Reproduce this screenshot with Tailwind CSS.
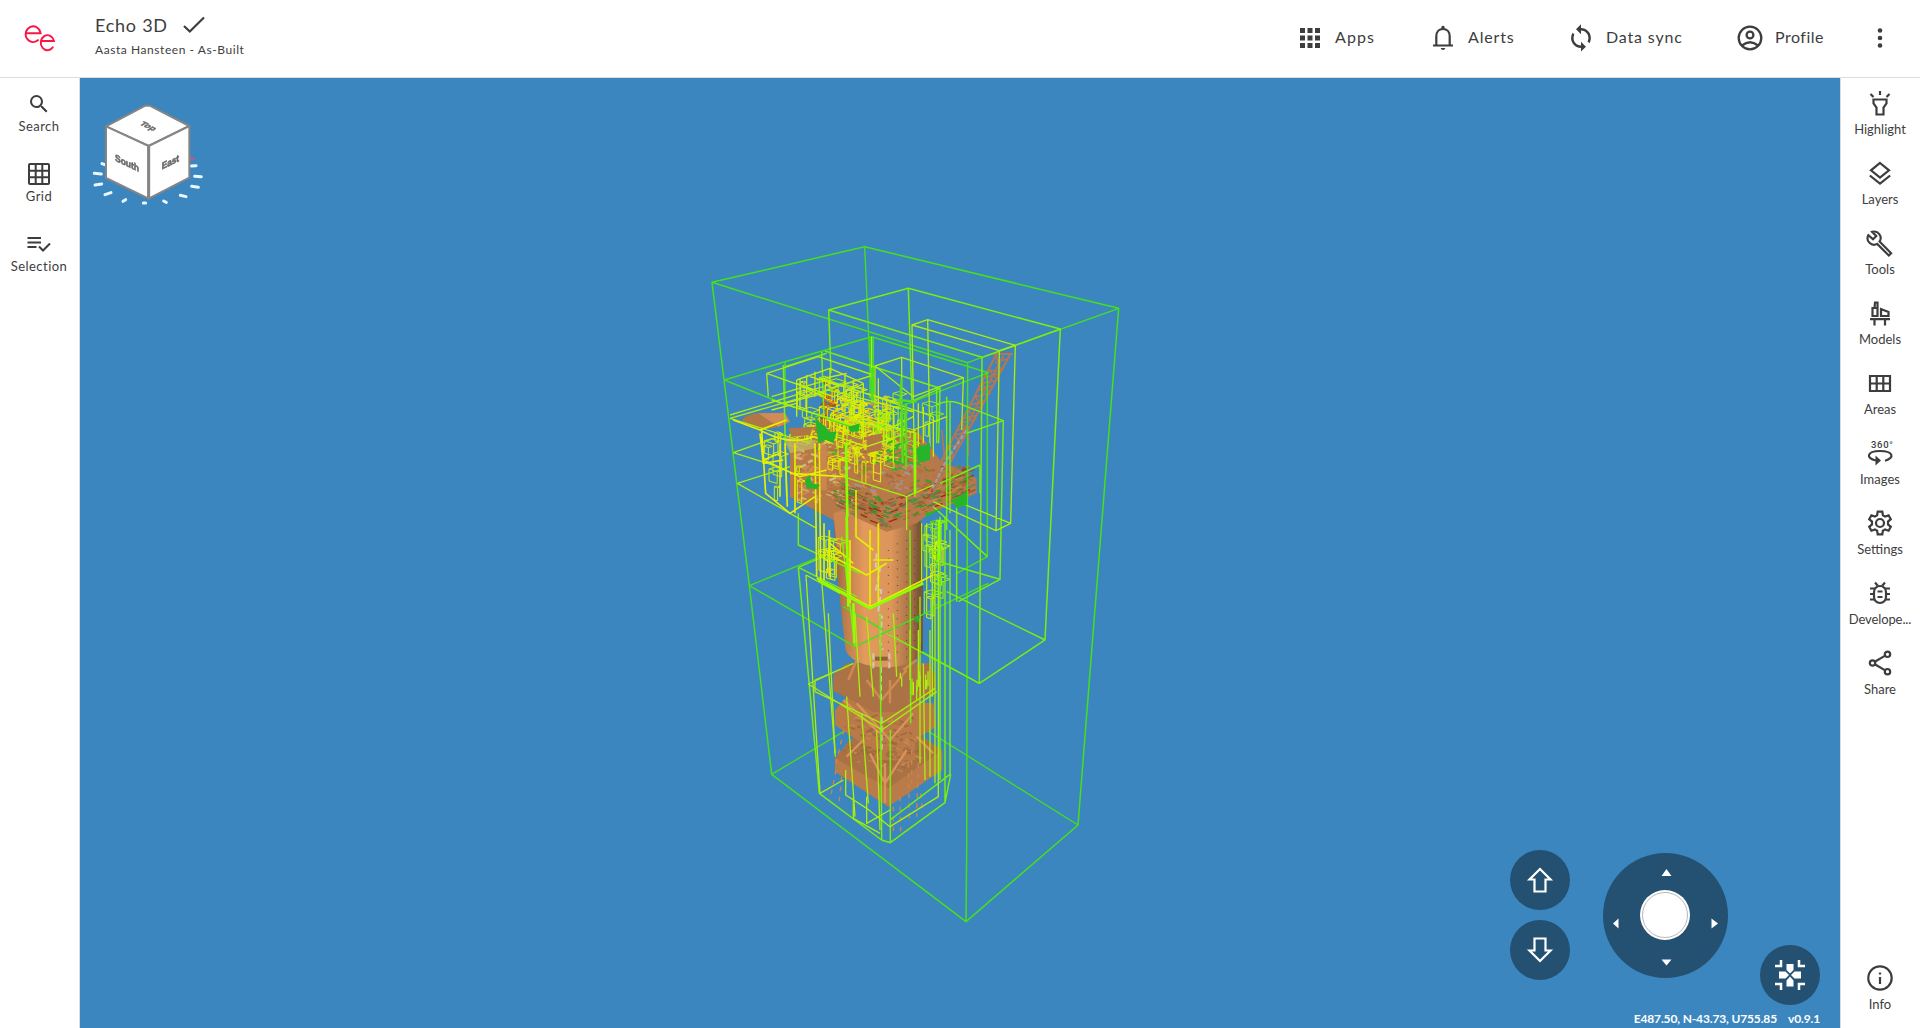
<!DOCTYPE html>
<html lang="en">
<head>
<meta charset="utf-8">
<title>Echo 3D</title>
<script src="https://cdn.jsdelivr.net/npm/@tailwindcss/browser@4"></script>
</head>
<body class="h-screen w-screen overflow-hidden bg-white font-['Lato',sans-serif] text-[#3d3d3d] flex flex-col">
<header class="h-[78px] shrink-0 border-b border-[#dcdcdc] flex">
  <div class="w-20 flex justify-center">
    <svg class="mt-[23px] w-8 h-8" viewBox="24 23 32 32" fill="none" stroke="#fb1444" stroke-width="1.9"><path d="M26 33.2H40.6A7.5 7.9 0 1 0 38.6 39.7"/><path d="M40.5 41H54A6.7 7.5 0 1 0 53.2 46.6"/></svg>
  </div>
  <div class="pl-[15px] pt-[13px] w-[400px]">
    <div class="flex items-center h-6 gap-[15px]"><span class="text-[18px] leading-6 tracking-[.75px] whitespace-nowrap">Echo 3D</span>
      <svg class="w-[22px] h-5" viewBox="0 0 22 20" fill="none" stroke="#3d3d3d" stroke-width="2.2"><path d="M1 11 6.8 16.5 21 2.5"/></svg></div>
    <div class="text-[12px] leading-4 mt-[5px] tracking-[.56px] whitespace-nowrap">Aasta Hansteen - As-Built</div>
  </div>
  <nav class="ml-auto flex h-[76px] items-center text-base whitespace-nowrap">
    <div class="w-[133px] flex items-center gap-[13px]"><svg class="w-6 h-6 shrink-0" viewBox="0 0 24 24" fill="#3d3d3d"><path d="M2 2h5v5H2zm7.5 0h5v5h-5zM17 2h5v5h-5zM2 9.5h5v5H2zm7.5 0h5v5h-5zm7.5 0h5v5h-5zM2 17h5v5H2zm7.5 0h5v5h-5zm7.5 0h5v5h-5z"/></svg><span class="-mt-[2px] tracking-[1.1px]">Apps</span></div>
    <div class="w-[138px] flex items-center gap-[13px]"><svg class="w-6 h-6 shrink-0 overflow-visible" viewBox="0 0 24 24" fill="none" stroke="#3d3d3d" stroke-width="2.2"><path d="M2 19.5h20M5.300 19V10.500C5.300 6 8 3 12 3s6.700 3 6.700 7.500V19"/><path d="M10.300 2.500V1.500a1.700 1.700 0 0 1 3.400 0v1zM9.700 22h4.600q-.5 2-2.300 2T9.700 22z" fill="#3d3d3d" stroke="none"/></svg><span class="-mt-[2px] tracking-[.85px]">Alerts</span></div>
    <div class="w-[169px] flex items-center gap-[13px]"><svg class="w-6 h-6 shrink-0 overflow-visible" viewBox="0 0 24 24" fill="#3d3d3d"><path transform="translate(-2.900 -2.900) scale(1.240)" d="M12 4V1L8 5l4 4V6c3.310 0 6 2.690 6 6 0 1.010-.25 1.970-.7 2.800l1.460 1.460A7.930 7.930 0 0 0 20 12c0-4.420-3.580-8-8-8zm0 14c-3.310 0-6-2.690-6-6 0-1.010.25-1.970.7-2.800L5.240 7.740A7.930 7.930 0 0 0 4 12c0 4.420 3.580 8 8 8v3l4-4-4-4v3z"/></svg><span class="-mt-[2px] tracking-[.85px]">Data sync</span></div>
    <div class="w-[130px] flex items-center gap-[13px]"><svg class="w-6 h-6 shrink-0 overflow-visible" viewBox="0 0 24 24" fill="none" stroke="#3d3d3d" stroke-width="2.300"><circle cx="12" cy="12" r="11.300"/><circle cx="12" cy="9" r="3.400"/><path d="M4 19.500Q12 13 20 19.500"/></svg><span class="-mt-[2px] tracking-[.5px]">Profile</span></div>
    <svg class="w-6 h-6 mr-7" viewBox="0 0 24 24" fill="#3d3d3d"><circle cx="12" cy="4.500" r="2.300"/><circle cx="12" cy="12" r="2.300"/><circle cx="12" cy="19.500" r="2.300"/></svg>
  </nav>
</header>
<div class="flex flex-1 min-h-0">
  <aside class="w-20 shrink-0 border-r border-[#dcdcdc] pr-px pt-[14px] text-[13px] leading-4 tracking-[.45px] text-center">
    <div class="h-[70px] flex flex-col items-center gap-[2px]"><svg class="w-6 h-6" viewBox="0 0 24 24" fill="#3d3d3d"><path d="M15.500 14h-.79l-.28-.27A6.471 6.471 0 0 0 16 9.500 6.500 6.500 0 1 0 9.500 16c1.610 0 3.090-.59 4.230-1.570l.27.28v.79l5 4.990L20.490 19l-4.990-5zm-6 0C7.010 14 5 11.990 5 9.500S7.010 5 9.500 5 14 7.010 14 9.500 11.990 14 9.500 14z"/></svg>Search</div>
    <div class="h-[70px] flex flex-col items-center gap-[2px]"><svg class="w-6 h-6" viewBox="0 0 24 24" fill="none" stroke="#3d3d3d" stroke-width="2"><rect x="2" y="2" width="20" height="20" rx="1"/><path d="M2 8.700h20M2 15.300h20M8.700 2v20M15.300 2v20"/></svg>Grid</div>
    <div class="h-[70px] flex flex-col items-center gap-[2px]"><svg class="w-6 h-6" viewBox="0 0 24 24" fill="none" stroke="#3d3d3d" stroke-width="2"><path d="M.5 6h13.500M.5 10.500h13.500M.5 15h9M12 14.500l4 4L23 11.500"/></svg>Selection</div>
  </aside>
  <main class="relative flex-1 bg-[#3b86be] overflow-hidden">
    <svg class="absolute inset-0 w-full h-full" viewBox="80 78 1760 950">
      <defs>
        <linearGradient id="leg"><stop offset="0" stop-color="#91603a"/><stop offset=".12" stop-color="#b97b49"/><stop offset=".35" stop-color="#e39a5d"/><stop offset=".65" stop-color="#dc955a"/><stop offset=".88" stop-color="#a26e46"/><stop offset="1" stop-color="#67472f"/></linearGradient>
        <filter id="soft"><feGaussianBlur stdDeviation="2"/></filter>
      </defs>
      <g transform="translate(700 230) scale(.33333)" fill="none" stroke-linejoin="round">
        <g stroke="#43e01e" stroke-width="4">
          <path d="M494 50 515 520M215 1633 562 1427 1134 1785M148 1067 360 980M550 1200 838 1360"/>
        </g>
        <!-- legs and pontoons -->
        <g stroke="none">
          <path fill="#b97b49" d="M405 1585 450 1530 540 1500 650 1510 727 1560V1620L565 1730 405 1625z"/>
          <path fill="#aa7244" d="M405 1585 450 1530 540 1500 650 1510 727 1560 565 1675z"/>
          <path fill="#b97a48" d="M405 1440 440 1400 700 1420 708 1490 645 1530V1590H530L500 1550 405 1485z"/>
          <path fill="#ab7345" d="M400 1335 440 1300 690 1300 708 1345V1385L600 1446H520L400 1382z"/>
          <path fill="url(#leg)" d="M400 850 640 830 668 890V1260C655 1330 450 1330 436 1255L412 1040z"/>
        </g>
        <path stroke="#7d5837" stroke-width="14" d="M660 880V1240"/>
        <path stroke="#5a432e" stroke-width="3" stroke-dasharray="3 22" d="M592 940V1290M620 930V1290M565 960V1290M644 930V1250"/>
        <path stroke="#8c6232" stroke-width="12" d="M525 1286h38"/>
        <path stroke="#d08a51" stroke-width="7" d="M445 1350 470 1290M500 1350 545 1410 620 1320M650 1290 610 1320M570 1420V1350"/>
        <g id="base"></g>
        <path stroke="#d9925a" stroke-width="7" d="M430 1410 540 1510M440 1580 490 1530M650 1520 700 1570M510 1570 555 1660 620 1560M470 1420 570 1530 640 1450M555 1600V1720"/>
        <path stroke="#cfc8c2" stroke-width="6" stroke-dasharray="18 9" d="M530 970 527 1010 541 1010 528 1080 544 1080 534 1150 546 1160 540 1235 548 1260M520 1270V1320M568 1270V1320M543 1310V1420M545 1460V1560"/>
        <path stroke="#c98550" stroke-width="4" stroke-dasharray="14 16" d="M408 1620 390 1710M425 1640 417 1720M580 1730V1810M600 1700 602 1810M625 1600 628 1770M655 1600 650 1760M662 1690 668 1750M635 1560V1660M432 1500 408 1600"/>
        <!-- topside decks -->
        <g stroke="none">
          <path fill="#b77949" d="M270 620 380 560 560 600 650 600 720 690 830 745V790L690 850 650 880 560 905 440 850 400 870 270 800z"/>
          <ellipse cx="195" cy="572" rx="68" ry="24" fill="#b07645"/>
          <path fill="#d18c56" d="M175 550 255 548 270 575 235 590z"/>
          <path fill="#cb864f" d="M400 850 460 830 460 960 410 950z"/>
        </g>
        <g id="clutter"></g>
        <path fill="#b07645" d="M265 595 340 590 330 615 275 620zM500 620 545 610 545 660 500 670z"/>
        <path fill="#bfb264" fill-opacity=".8" d="M248 620 345 630 345 655 270 670z"/>
        <path fill="#cb864f" d="M362 645h18v135h-18z"/>
        <!-- flare boom -->
        <g stroke="#b9764e" stroke-width="6"><path d="M888 375 725 690 690 785M930 375 800 610 710 770M870 372h68M910 378 760 660"/><path stroke-width="5" d="M888 378 905 425 866 420 893 450 845 460 870 490 825 500 848 530 803 540 828 568 785 577 803 605 764 615 782 645 742 650 762 680 725 690 738 720 705 740M925 385 885 400M900 430 855 442M878 467 830 482M854 512 810 526M832 555 790 565M812 590 770 602M725 600 735 690M805 610V680"/><path stroke="#a09aa4" stroke-width="7" stroke-dasharray="14 5" d="M800 600 740 690 698 775"/><path stroke="#7f7f85" stroke-width="4" stroke-dasharray="10 16" d="M905 390 800 590"/></g>
        <!-- bounding volumes -->
        <g stroke="#43e01e" stroke-width="4.500">
          <path d="M36 157 494 50 1256 235 803 398zM36 157 148 1067 215 1633 798 2075 1134 1785 1256 235M803 398 800 1870 798 2075"/>
          <path d="M73 450 255 395 515 320 865 428 600 530M73 450 215 507 480 600M148 1067 465 1250 865 1060M550 1200 430 1130M862 430V980L770 1030"/>
          <path d="M255 395V520M510 320V500M520 320V520" />
        </g>
        <g stroke="#78ee10" stroke-width="4.500">
          <path d="M386 240 625 175 1081 297 846 382zM386 240 393 430M625 175 636 520M1081 297 1035 1230 838 1360 560 1210M846 382 838 1360M1035 1230 740 1085"/>
          <path d="M375 363 720 475 640 512M720 475 716 640M380 370 255 410M720 520Q755 505 800 530M800 530 910 572 900 1048 775 1115M910 572 800 610M750 515V850M770 820V1115M710 475V640M295 850V945L480 1030M840 705 720 760M840 705V790M700 990 900 1048M700 830 862 980M740 500V900"/>
          <path d="M295 1012 370 980M295 1012 358 1690 545 1830 571 1838 735 1718 752 1633M750 900V1633L570 1770M735 860V1718M720 860V1650M540 1150 545 1830M571 1500V1838M630 900 632 1480M425 920 465 1250M295 1012 470 1100M250 405 260 800M365 365 372 560"/>
        </g>
        <g stroke="#a9ee0c" stroke-width="4">
          <path d="M636 285 683 269 946 346 898 362zM636 285 645 800M683 269 690 650M946 346 932 880 888 902 700 815M898 362 888 902M932 880 760 810"/>
          <path d="M525 408 605 382 790 443 640 500zM605 382V620M790 443 785 600M525 408V560M200 430 355 380 520 435 380 480M200 430 205 500M200 430 340 480M515 320V450"/>
          <path d="M90 565 385 480 640 545M90 565 330 640M90 555 370 470M100 668 250 615M100 668 240 712M112 760 270 710M112 760 270 850 350 895M215 510 500 600M215 500 380 450 700 560"/>
          <path d="M318 1035 360 1690M318 1035 420 1090M365 1050 406 1580M325 1362 545 1500 710 1385M345 1385 545 1480 705 1375M325 1362 460 1300M345 1350V1385M345 1350 440 1310M360 1690 430 1650M437 1620V1695L500 1735 570 1790 715 1700V900M500 1700V1780L570 1740M460 1700V1765L540 1810"/>
          <path d="M620 800V900M430 740 620 800 700 765M385 1150 405 1570M465 1150 480 1400M485 1450 505 1720M500 1160 520 1400M580 1150 590 1340M630 1200V1350M670 1300 675 1650M690 1200V1640M705 1000V1660M665 880V1060M680 880V1100M697 880V1400M655 1200V1370M440 1400 465 1760M530 1500 540 1800M660 1100V1600"/>
        </g>
        <path stroke="#c8ee08" stroke-width="4" d="M290 450 390 415 490 460M290 450V560M300 445 300 540M320 435V560M345 425V500M390 415V470M435 432V560M460 450V600M490 460V620M535 445V600M290 460 400 500 490 462M310 470 370 500M255 520 370 490M215 540 290 520M330 440 430 470M350 450 440 430M440 560 560 600 640 560M540 520 640 545M470 560 650 610M500 490 600 520M560 500V640M580 530V700M655 520V650M670 530V640M700 560V680M640 600 740 560M380 610 500 650 620 610"/>
        <path stroke="#e6f000" stroke-width="5" d="M185 600 197 790 270 850 345 800M180 600 260 570M240 640V800M255 640 262 830M345 640 350 1040M358 640 362 1050M372 880V1050M388 900V1040M285 640V850M350 1045 510 1130 700 1035M468 780V920L520 960M535 880V1120M510 900V1130M450 930V1120M180 610 190 700 250 690M190 690 240 670M400 980 500 1035 560 1000M520 990H580M390 940 460 1000M100 570 180 600Q270 650 340 620L400 640M190 690 300 740 380 720M270 730 430 740"/>
        <path stroke="#8dff00" stroke-width="8" d="M438 640 442 860M440 860 445 1130M460 1120 463 1240M717 870V990M645 610V790M355 1050 510 1135 670 1060"/>
        <path stroke="#55dd18" stroke-width="7" d="M605 445 600 520M605 520 608 700M618 520V710M590 510 650 515M517 415V510"/>
        <path fill="#26b52a" d="M650 655 690 640V690L655 700zM345 560 362 580 378 590 385 605 410 605 400 640 378 630 355 640zM445 590 480 580 475 605 450 605zM315 750 330 735 335 760 360 765 350 778 320 775zM755 810 800 785V825L770 835zM675 850 730 835 680 860zM640 1165 660 1155 655 1180z"/>
      </g>

      <!-- orientation cube -->
      <g transform="scale(.33333)" filter="url(#soft)">
        <g stroke="#eaf7ff" stroke-width="9" stroke-linecap="round"><path d="M306 491 314 494M283 520 304 522M285 555 305 552M315 584 333 578M369 604 377 599M430 609 437 609M491 603 499 607M541 586 558 590M575 559 595 562M584 529 604 530M573 498 588 497"/></g>
        <path d="M572 471 587 477 572 484z" fill="#c45878"/>
        <g fill="#fff" stroke="#858585" stroke-width="6" stroke-linejoin="round"><path d="M318 379 436 317H449L568 378 446 438z"/><path d="M318 379 446 438V596L318 534z"/><path d="M446 438 568 378V533L446 596z"/><path stroke-width="9" d="M446 440V593"/></g>
        <g fill="#555" stroke="#777" stroke-width="2" font-family="Liberation Sans" font-weight="bold" font-size="29" text-anchor="middle"><text transform="matrix(.9 .42 -.75 .5 438 383)" font-size="27">Top</text><text transform="matrix(.88 .4 0 1 381 499)">South</text><text transform="matrix(.85 -.42 0 1 511 496)">East</text></g>
      </g>
    </svg>

    <button class="absolute left-[1430px] top-[772px] w-[60px] h-[60px] rounded-full bg-[#245071] flex items-center justify-center"><svg class="w-7 h-7" viewBox="0 0 28 28" fill="none" stroke="#fff" stroke-width="2.200"><path d="M14 3 24.500 13.500H19.500V25.500H8.500V13.500H3.500z"/></svg></button>
    <button class="absolute left-[1430px] top-[842px] w-[60px] h-[60px] rounded-full bg-[#245071] flex items-center justify-center"><svg class="w-7 h-7 rotate-180" viewBox="0 0 28 28" fill="none" stroke="#fff" stroke-width="2.200"><path d="M14 3 24.500 13.500H19.500V25.500H8.500V13.500H3.500z"/></svg></button>
    <svg class="absolute left-[1523px] top-[775px] w-[125px] h-[125px]" viewBox="0 0 125 125"><circle cx="62.500" cy="62.500" r="62.500" fill="#245071"/><path fill="#fff" d="M63.500 16 68.500 23h-10zM63.500 112.500 68.500 106.500h-10zM10 70.500 15.500 65.500v10zM115 70.500 108.500 65.500v10z"/><circle cx="62" cy="62" r="25" fill="#fff"/><circle cx="62" cy="62" r="22.500" fill="none" stroke="#a5a5a5" stroke-width=".8"/></svg>
    <button class="absolute left-[1680px] top-[867px] w-[60px] h-[60px] rounded-full bg-[#245071] flex items-center justify-center"><svg class="w-[30px] h-[30px]" viewBox="0 0 30 30" fill="#fff"><g fill="none" stroke="#fff" stroke-width="2.500"><path d="M6 0V6H0M24 0V6H30M6 30V24H0M24 30V24H30"/></g><path d="M11.500 4h7v6L15 13.500 11.500 10zM11.500 26.500h7v-6L15 16.500l-3.500 4zM4 11.500h6.500L14 15l-3.500 3.500H4zM26 11.500h-6.500L16 15l3.500 3.500H26z"/></svg></button>
    <div class="absolute right-5 bottom-px flex gap-[11px] text-[12px] leading-4 font-bold text-white whitespace-nowrap tracking-[-.15px]"><span>E487.50, N-43.73, U755.85</span><span>v0.9.1</span></div>
  </main>
  <aside class="w-20 shrink-0 border-l border-[#dcdcdc] pr-px pt-3 pb-4 text-[13px] leading-4 flex flex-col">
    <div class="h-[70px] flex flex-col items-center gap-[5px]"><svg class="w-[26px] h-[26px]" viewBox="0 0 26 26" fill="none" stroke="#3d3d3d" stroke-width="2.200"><path d="M6.500 9.500h13v4l-3 4v7h-7v-7l-3-4zM13 1v4M3.500 4l3 3M22.500 4l-3 3"/></svg>Highlight</div>
    <div class="h-[70px] flex flex-col items-center gap-[5px]"><svg class="w-[26px] h-[26px]" viewBox="0 0 26 26" fill="none" stroke="#3d3d3d" stroke-width="2.200"><path d="M13 3 22 10.300 13 17.500 4 10.300zM2.800 15.500 13 23.700 23.200 15.500"/></svg>Layers</div>
    <div class="h-[70px] flex flex-col items-center gap-[5px]"><svg class="w-[28px] h-[26px] overflow-visible" viewBox="0 0 28 28" fill="none" stroke="#3d3d3d" stroke-width="2.300"><path d="M13.500 12.500 26 25 23.500 27.500 11 15A7 7 0 0 1 1.500 5.500L6.500 10 10 6.500 5.500 2A7 7 0 0 1 13.500 12.500z"/></svg>Tools</div>
    <div class="h-[70px] flex flex-col items-center gap-[5px]"><svg class="w-[26px] h-[26px]" viewBox="0 0 26 26" fill="none" stroke="#3d3d3d" stroke-width="2.200"><path d="M5.500 16V8h5v8zM7.500 8 8 2.500h2.500V8M14 16V9l7.500 3v4zM3 19.200h20M7.500 19v6.500M18 19v6.500"/></svg>Models</div>
    <div class="h-[70px] flex flex-col items-center gap-[5px]"><svg class="w-[26px] h-[26px]" viewBox="0 0 26 26" fill="none" stroke="#3d3d3d" stroke-width="2.200"><path d="M3 6h20v15H3zM3 13.500h20M9.700 6v15M16.300 6v15"/></svg>Areas</div>
    <div class="h-[70px] flex flex-col items-center gap-[5px]"><svg class="w-[26px] h-[26px] overflow-visible" viewBox="0 0 26 26" fill="none" stroke="#3d3d3d" stroke-width="2.200"><text x="4" y="7.500" font-family="Roboto" font-weight="500" font-size="9.500" textLength="22" fill="#3d3d3d" stroke="none">360°</text><path d="M18 20.800C28 18 26.500 11 13 11S-1.500 18.500 9 20.500"/><path d="M8.500 15.500 14 20.500 8.500 25.500z" fill="#3d3d3d" stroke="none"/></svg>Images</div>
    <div class="h-[70px] flex flex-col items-center gap-[5px]"><svg class="w-[26px] h-[26px]" viewBox="0 0 26 26" fill="none" stroke="#3d3d3d" stroke-width="2.200"><path d="M10.700 1.700h4.600l.6 3.600 2.200 1.300 3.500-1.300 2.200 3.900-2.800 2.400v2.800l2.800 2.400-2.200 3.900-3.500-1.300-2.200 1.300-.6 3.600h-4.600l-.6-3.600-2.200-1.300-3.500 1.300-2.200-3.900L5 14.400v-2.800L2.200 9.200l2.200-3.900 3.500 1.300 2.200-1.300z"/><circle cx="13" cy="13" r="4"/></svg>Settings</div>
    <div class="h-[70px] flex flex-col items-center gap-[5px]"><svg class="w-[26px] h-[26px]" viewBox="0 0 26 26" fill="none" stroke="#3d3d3d" stroke-width="2.200"><rect x="7" y="6" width="12" height="17" rx="6"/><path d="M8 2.500 11 6M18 2.500 15 6M3 8.500h5M18 8.500h5M3 14h4M19 14h4M3 19.500h5M18 19.500h5M10.500 11.500h5M10.500 17h5"/></svg><span class="tracking-[-.1px]">Develope...</span></div>
    <div class="h-[70px] flex flex-col items-center gap-[5px]"><svg class="w-[26px] h-[26px]" viewBox="0 0 26 26" fill="none" stroke="#3d3d3d" stroke-width="2.200"><circle cx="5.500" cy="13" r="2.700"/><circle cx="20.500" cy="4.300" r="2.700"/><circle cx="20.500" cy="21.700" r="2.700"/><path d="M7.800 11.700 18.200 5.600M7.800 14.300 18.200 20.400"/></svg>Share</div>
    <div class="mt-auto flex flex-col items-center gap-[5px]"><svg class="w-[26px] h-[26px]" viewBox="0 0 26 26" fill="none" stroke="#3d3d3d" stroke-width="2.200"><circle cx="13" cy="13" r="11.700"/><path d="M13 12v7M13 7.500v2"/></svg>Info</div>
  </aside>
</div>
<script>
// Deterministic small equipment pieces scattered over the topside decks and the base.
let s = 7;
const r = () => (s = (s * 16807) % 2147483647) / 2147483647;
const scatter = zones => {
  let out = '';
  for (const [x, y, w, h, n, cols, kind] of zones) {
    for (let i = 0; i < n; i++) {
      let a = Math.round(x + r() * w), b = Math.round(y + r() * h);
      const c = cols[Math.floor(r() * cols.length)], k = 4 + r() * 11;
      if (kind === 'c') {
        const d = r() > .5 ? .33 : -.42;
        out += `<path stroke="${c}" stroke-width="${(3 + r() * 5).toFixed(1)}" d="M${a} ${b}l${(k * 1.5).toFixed(0)} ${(k * 1.5 * d).toFixed(0)}"/>`;
      } else if (kind === 'd') {
        // left half slopes down towards the front corner, right half back up
        const t = r(), left = r() > .45, u = r() * 85;
        a = left ? 400 + t * 160 : 560 + t * 250;
        b = left ? 745 + t * 65 + u : 810 - t * 100 + u;
        out += `<path stroke="${c}" stroke-width="4" d="M${a.toFixed(0)} ${b.toFixed(0)}l${(k * 1.8).toFixed(0)} ${(k * 1.8 * (left ? .4 : -.4)).toFixed(0)}"/>`;
      } else if (kind === 'b') {
        const p = k * 1.6, q = k * 2, v = 15 + r() * 50;
        out += `<path stroke="${c}" stroke-width="3" d="M${a} ${b}l${p} ${-p * .28}l${q} ${q * .3}l${-p} ${p * .35}zv${v}l${q} ${q * .3}v${-v}"/>`;
      } else {
        out += `<path stroke="${c}" stroke-width="4" d="M${a} ${b}v${(15 + r() * 40).toFixed(0)}"/>`;
      }
    }
  }
  return out;
};
document.getElementById('base').innerHTML = scatter([
  [430, 1460, 210, 120, 90, ['#a56f42', '#c58650', '#9b683e'], 'c'],
  [450, 1560, 200, 60, 26, ['#a06b40', '#c58650'], 'c'],
  [600, 1310, 90, 60, 12, ['#a0f010', '#c0e810'], 'v']
]);
document.getElementById('clutter').innerHTML = scatter([
  [280, 640, 160, 180, 190, ['#b06d3c', '#cf8950', '#c9c070', '#d8a070', '#d08a50', '#b5793f'], 'c'],
  [460, 610, 190, 180, 190, ['#a6683a', '#cf8950', '#b07040', '#2fae2c', '#c07a48', '#9f9498'], 'c'],
  [640, 710, 160, 100, 120, ['#a6683a', '#b97848', '#49962c', '#8b5a34', '#b07040'], 'c'],
  [0, 0, 0, 0, 330, ['#9c6136', '#b97848', '#a86c40', '#2c9e2c', '#8b5a34', '#a82414', '#a87a30', '#c58650', '#54866a'], 'd'],
  [340, 560, 230, 110, 110, ['#33b02b', '#d8d020', '#b06d3c', '#c98a50', '#8fd510'], 'c'],
  [360, 455, 40, 110, 50, ['#c95b10', '#c23c10', '#d0b020', '#b07040'], 'c'],
  [400, 500, 180, 70, 70, ['#c98a50', '#d8c030', '#e0e010', '#b8a060'], 'c'],
  [290, 440, 170, 170, 30, ['#d8ee08', '#b8ee08', '#ecec00'], 'b'],
  [370, 540, 190, 160, 42, ['#ecec00', '#c8ee08', '#e0e800'], 'b'],
  [430, 550, 140, 150, 70, ['#e8e800', '#d8e020', '#e0b030'], 'c'],
  [190, 600, 110, 190, 10, ['#e4ee00', '#c8ee08'], 'b'],
  [520, 480, 190, 160, 18, ['#8af010', '#a9ee0c'], 'b'],
  [550, 640, 110, 60, 30, ['#2fae2c', '#26b52a'], 'c'],
  [665, 870, 45, 250, 20, ['#a0f010', '#e0f000', '#58dd20'], 'b'],
  [345, 900, 50, 120, 10, ['#e8f000', '#c8ee08'], 'b']
]);
</script>
</body>
</html>
